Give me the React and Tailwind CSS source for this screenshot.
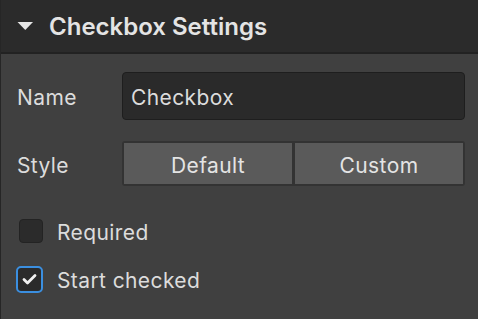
export default function App() {
  return (
    <div className="w-[478px] h-[319px] overflow-hidden bg-[#404040] border-l border-[#262626] text-[#dcdcdc] font-['Inter',sans-serif]">
      <div className="h-[54px] bg-[#2b2b2b] border-b-2 border-[#222222] flex items-center pl-[16px]">
        <svg width="17" height="10" viewBox="0 0 17 10" className="mr-[15px]">
          <polygon points="0.5,1 16,1 8.25,9" fill="#e6e6e6" />
        </svg>
        <span className="text-[24px] font-semibold text-[#e4e4e4] pt-[2px]">Checkbox Settings</span>
      </div>
      <div className="pl-[17px] pr-[13px] pt-[18px] text-[21px] tracking-[0.4px]">
        <div className="flex items-center h-[48px]">
          <span className="w-[104px] -ml-[1px] pt-[4px]">Name</span>
          <div className="flex-1 ml-[1px] h-[48px] bg-[#2a2a2a] border border-[#1e1e1e] rounded-[4px] flex items-center px-[8px] pt-[4px]">Checkbox</div>
        </div>
        <div className="flex items-center h-[45px] mt-[21px]">
          <span className="w-[104px] -ml-[1px] pt-[5px]">Style</span>
          <div className="flex-1 ml-[1px] h-[45px] flex border-2 border-[#333333] rounded-[3px] bg-[#333333] gap-[3px]">
            <div className="flex-1 bg-[#5a5a5a] flex items-center justify-center text-[#e4e4e4] pt-[5px]">Default</div>
            <div className="flex-1 bg-[#5a5a5a] flex items-center justify-center text-[#e4e4e4] pt-[5px]">Custom</div>
          </div>
        </div>
        <div className="flex items-center mt-[32px] h-[26px]">
          <div className="w-[24px] h-[24px] ml-[1px] bg-[#2b2b2b] border border-[#232323] rounded-[4px]" />
          <span className="ml-[14px] pt-[4px]">Required</span>
        </div>
        <div className="flex items-center mt-[21px] h-[28px]">
          <div className="w-[27px] h-[27px] -ml-[2px] bg-[#2b2b2b] border-2 border-[#3b8fe0] rounded-[5px] flex items-center justify-center">
            <svg width="15" height="12" viewBox="0 0 15 12">
              <path d="M2 6.5 L5.5 10 L13 2.5" stroke="#f2f2f2" strokeWidth="2.8" fill="none" strokeLinecap="round" strokeLinejoin="round" />
            </svg>
          </div>
          <span className="ml-[14px] pt-[4px]">Start checked</span>
        </div>
      </div>
    </div>
  );
}
